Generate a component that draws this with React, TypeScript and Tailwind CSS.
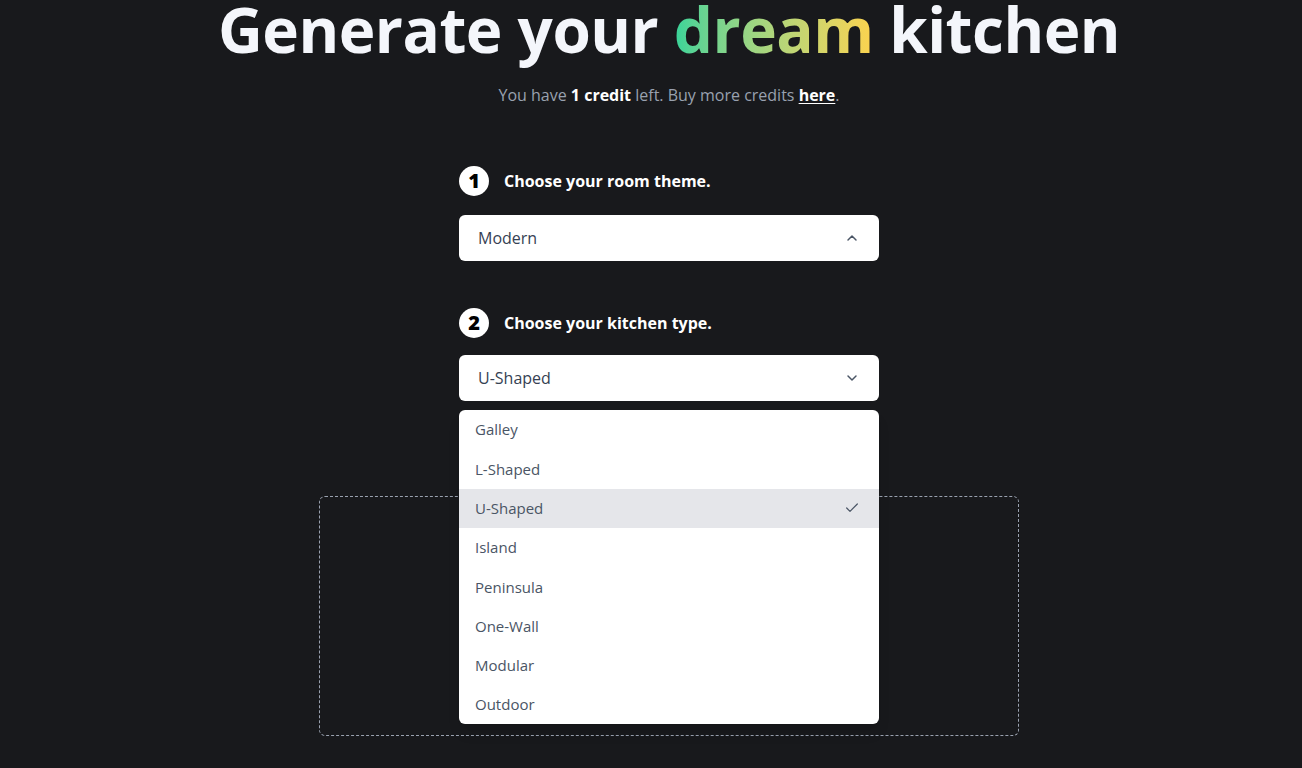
import { ChevronUp, ChevronDown, Check } from 'lucide-react'

const kitchenTypes = ['Galley', 'L-Shaped', 'U-Shaped', 'Island', 'Peninsula', 'One-Wall', 'Modular', 'Outdoor']

function StepLabel({ n, text }: { n: number; text: string }) {
  return (
    <div className="flex items-center gap-[15px]">
      <div className="w-[30px] h-[30px] rounded-full bg-white text-black flex items-center justify-center text-[20px] font-extrabold leading-none">
        {n}
      </div>
      <p className="text-white text-[16px] font-bold">{text}</p>
    </div>
  )
}

export default function App() {
  return (
    <div
      className="min-h-screen bg-[#18191c] flex flex-col items-center overflow-hidden pl-[36px]"
      style={{ fontFamily: '"Open Sans", "Noto Sans", sans-serif' }}
    >
      {/* Title */}
      <h1 className="text-[62px] font-bold text-[#f4f6fb] leading-[58px] tracking-[-0.5px]">
        Generate your{' '}
        <span className="bg-gradient-to-r from-[#34d399] to-[#fcd34d] bg-clip-text text-transparent">dream</span>{' '}
        kitchen
      </h1>
      <p className="mt-[25px] text-[16px] text-gray-400">
        You have <span className="font-bold text-white">1 credit</span> left. Buy more credits{' '}
        <span className="font-bold text-white underline underline-offset-2">here</span>.
      </p>

      {/* Form */}
      <div className="w-[420px] mt-[59px]">
        <StepLabel n={1} text="Choose your room theme." />
        <div className="mt-[19px] h-[46px] rounded-md bg-white flex items-center justify-between px-[19px]">
          <span className="text-[16px] text-gray-700">Modern</span>
          <ChevronUp className="w-[16px] h-[16px] text-gray-600" strokeWidth={2.2} />
        </div>

        <div className="mt-[47px]">
          <StepLabel n={2} text="Choose your kitchen type." />
        </div>
        <div className="relative mt-[17px]">
          <div className="h-[46px] rounded-md bg-white flex items-center justify-between px-[19px]">
            <span className="text-[16px] text-gray-700">U-Shaped</span>
            <ChevronDown className="w-[16px] h-[16px] text-gray-600" strokeWidth={2.2} />
          </div>

          {/* Dropdown menu */}
          <div className="absolute left-0 right-0 top-full mt-[9px] z-10 bg-white rounded-md shadow-lg">
            {kitchenTypes.map((t) => (
              <div
                key={t}
                className={`h-[39.3px] flex items-center justify-between pl-[16px] pr-[19px] text-[15px] text-gray-600 ${
                  t === 'U-Shaped' ? 'bg-[#e5e6ea]' : ''
                }`}
              >
                <span>{t}</span>
                {t === 'U-Shaped' && <Check className="w-[16px] h-[16px] text-gray-600" strokeWidth={1.8} />}
              </div>
            ))}
          </div>
        </div>
      </div>

      {/* Upload area */}
      <div className="mt-[95px] w-[700px] h-[240px] rounded-md border border-dashed border-gray-400" />
    </div>
  )
}
